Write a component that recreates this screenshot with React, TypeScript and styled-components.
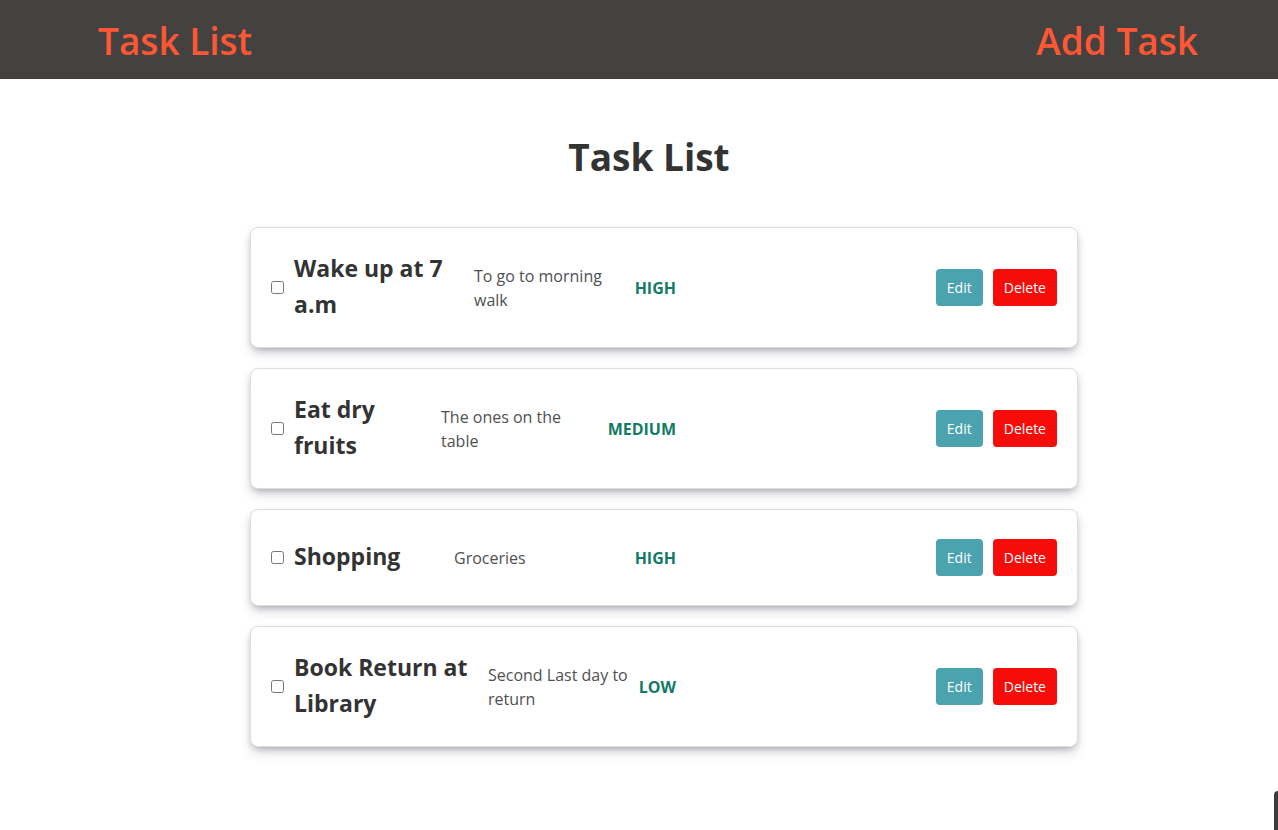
import React, { useState } from "react";
import styled, { createGlobalStyle } from "styled-components";

const GlobalStyle = createGlobalStyle`
  *, *::before, *::after { box-sizing: border-box; }
  body {
    margin: 0;
    background: #ffffff;
    color: #333333;
    font-family: "Segoe UI", "Open Sans", "Noto Sans", sans-serif;
    font-size: 16px;
    line-height: 24px;
  }
`;

const Page = styled.div`
  min-height: 100vh;
`;

const NavBar = styled.nav`
  display: flex;
  align-items: center;
  justify-content: space-between;
  padding: 11px 80px 8px 98px;
  background: #444240;
`;

const NavLink = styled.a`
  color: #ff5733;
  font-size: 37px;
  font-weight: 600;
  line-height: 60px;
  text-decoration: none;
`;

const Main = styled.main`
  padding-bottom: 40px;
`;

const Heading = styled.h1`
  margin: 48px 0 40px;
  padding-left: 20px;
  font-size: 37px;
  font-weight: 700;
  line-height: 60px;
  text-align: center;
`;

const List = styled.ul`
  display: flex;
  flex-direction: column;
  gap: 20px;
  margin: 0;
  padding: 0 200px 0 250px;
  list-style: none;
`;

const Card = styled.li`
  display: flex;
  align-items: center;
  justify-content: space-between;
  padding: 20px;
  border: 1px solid #dddddd;
  border-radius: 8px;
  background: #ffffff;
  box-shadow: 0 6px 12px -2px rgba(50, 50, 93, 0.25),
    0 3px 7px -3px rgba(0, 0, 0, 0.3);
`;

const Info = styled.div`
  display: flex;
  align-items: center;
  width: 405px;
`;

const Check = styled.input`
  flex: none;
  width: 13px;
  height: 13px;
  margin: 0 10px 0 0;
`;

const Title = styled.label<{ $width: number }>`
  flex: none;
  width: ${(p) => p.$width}px;
  padding-bottom: 3px;
  font-size: 23px;
  font-weight: 700;
  line-height: 36px;
`;

const Description = styled.p`
  flex: 1;
  min-width: 0;
  margin: 16px 0 15px;
  padding-right: 10px;
  color: #505050;
  font-size: 16px;
  font-weight: 500;
`;

const Priority = styled.span`
  color: #117a65;
  font-size: 16px;
  font-weight: 700;
`;

const Actions = styled.div`
  display: flex;
  gap: 10px;
`;

const Button = styled.button<{ $color: string }>`
  height: 37px;
  padding: 0 11px;
  border: 0;
  border-radius: 4px;
  background: ${(p) => p.$color};
  color: #ffffff;
  font-family: inherit;
  font-size: 14px;
  cursor: pointer;
`;

const SideTab = styled.div`
  position: fixed;
  right: 0;
  bottom: 0;
  width: 4px;
  height: 39px;
  border-top-left-radius: 4px;
  background: #3b3b3b;
`;

type Task = {
  id: string;
  title: string;
  description: string;
  priority: "HIGH" | "MEDIUM" | "LOW";
  titleWidth: number;
};

const tasks: Task[] = [
  { id: "wake", title: "Wake up at 7 a.m", description: "To go to morning walk", priority: "HIGH", titleWidth: 180 },
  { id: "eat", title: "Eat dry fruits", description: "The ones on the table", priority: "MEDIUM", titleWidth: 147 },
  { id: "shop", title: "Shopping", description: "Groceries", priority: "HIGH", titleWidth: 160 },
  { id: "book", title: "Book Return at Library", description: "Second Last day to return", priority: "LOW", titleWidth: 194 },
];

function TaskCard({ task }: { task: Task }) {
  const [done, setDone] = useState(false);
  return (
    <Card>
      <Info>
        <Check id={task.id} type="checkbox" checked={done} onChange={() => setDone(!done)} />
        <Title htmlFor={task.id} $width={task.titleWidth}>{task.title}</Title>
        <Description>{task.description}</Description>
        <Priority>{task.priority}</Priority>
      </Info>
      <Actions>
        <Button type="button" $color="#4ba3b0">Edit</Button>
        <Button type="button" $color="#f60c09">Delete</Button>
      </Actions>
    </Card>
  );
}

export default function App() {
  return (
    <Page>
      <GlobalStyle />
      <NavBar>
        <NavLink href="#tasks">Task List</NavLink>
        <NavLink href="#add">Add Task</NavLink>
      </NavBar>
      <Main id="tasks">
        <Heading>Task List</Heading>
        <List>
          {tasks.map((task) => (
            <TaskCard key={task.id} task={task} />
          ))}
        </List>
      </Main>
      <SideTab />
    </Page>
  );
}
